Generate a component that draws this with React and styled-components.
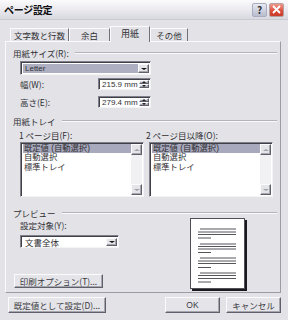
import React from 'react';
import styled, { createGlobalStyle, css } from 'styled-components';

const Global = createGlobalStyle`
  html, body { margin: 0; padding: 0; width: 288px; height: 320px; overflow: hidden; background: #e2e2e7; }
  body { font-family: "Noto Sans CJK JP", "Liberation Sans", sans-serif; }
  * { box-sizing: border-box; }
`;

const Window = styled.div`
  width: 288px;
  height: 320px;
  display: flex;
  flex-direction: column;
  background: #e2e2e7;
  color: #303034;
  font-size: 8.5px;
  line-height: 10px;
`;

const TitleBar = styled.div`
  height: 20px;
  flex: none;
  display: flex;
  align-items: center;
  gap: 2px;
  padding: 0 4px 0 4px;
  background: linear-gradient(#fbfbfd, #ececf1 45%, #d8d8e0);
  border-bottom: 1px solid #cacad2;
`;

const Title = styled.div`
  flex: 1;
  font-size: 10px;
  font-weight: bold;
  color: #111;
  letter-spacing: -0.3px;
`;

const CapButton = styled.div`
  width: 15px;
  height: 14px;
  border-radius: 2px;
  display: flex;
  align-items: center;
  justify-content: center;
  font-size: 10px;
  font-weight: bold;
  ${p => p.$close ? css`
    background: linear-gradient(#f09a8c, #dc4a38 60%, #c83a2a);
    border: 1px solid #b4a0a0;
    color: #fff;
  ` : css`
    background: linear-gradient(#e8eaf4, #b8bccc);
    border: 1px solid #a8acbc;
    color: #333;
  `}
`;

const Body = styled.div`
  flex: 1;
  display: flex;
  flex-direction: column;
  padding: 0 7px 0 5px;
`;

const TabsRow = styled.div`
  display: flex;
  align-items: flex-end;
  height: 21px;
  padding-left: 5px;
  position: relative;
  z-index: 1;
`;

const Tab = styled.div`
  width: ${p => p.$w}px;
  height: ${p => (p.$active ? 16 : 13)}px;
  margin-bottom: ${p => (p.$active ? -1 : 0)}px;
  display: flex;
  align-items: center;
  justify-content: center;
  background: #e2e2e7;
  border-top: 1px solid #fbfbfd;
  border-left: 1px solid #fbfbfd;
  border-right: 1px solid #707078;
  padding-bottom: ${p => (p.$active ? 2 : 0)}px;
  font-size: ${p => (p.$active ? 9 : 8.5)}px;
`;

const Panel = styled.div`
  height: 252px;
  flex: none;
  display: flex;
  flex-direction: column;
  padding: 6px 3px 0 7px;
  border: 1px solid #9c9ca4;
  border-top-color: #fbfbfd;
  border-left-color: #fbfbfd;
`;

const GroupHeader = styled.div`
  display: flex;
  align-items: center;
  gap: 6px;
  height: 10px;
  margin-top: ${p => p.$mt || 0}px;
`;

const GroupLine = styled.div`
  flex: 1;
  height: 2px;
  border-top: 1px solid #b2b2ba;
  border-bottom: 1px solid #fbfbfd;
`;

const sunken = css`
  background: #fff;
  border: 1px solid #80808a;
  border-right-color: #f4f4f6;
  border-bottom-color: #f4f4f6;
  box-shadow: inset 1px 1px 0 #404048;
`;

const raised = css`
  background: #e4e4e9;
  border: 1px solid #fbfbfd;
  border-right-color: #60606a;
  border-bottom-color: #60606a;
  box-shadow: inset -1px -1px 0 #a6a6ae;
`;

const Select = styled.div`
  ${sunken};
  width: ${p => p.$w}px;
  height: ${p => p.$h}px;
  margin-top: ${p => p.$mt || 0}px;
  margin-left: 7px;
  display: flex;
  align-items: stretch;
  padding: 2px 1px 1px 2px;
`;

const SelectValue = styled.div`
  flex: 1;
  display: flex;
  align-items: center;
  padding-left: 2px;
  background: ${p => (p.$hl ? '#afafc2' : 'transparent')};
  font-size: ${p => (p.$latin ? 8 : 8.5)}px;
  font-family: ${p => (p.$latin ? '"Liberation Sans", sans-serif' : 'inherit')};
`;

const ArrowBtn = styled.div`
  ${raised};
  width: 11px;
  display: flex;
  align-items: center;
  justify-content: center;
`;

const Tri = styled.div`
  width: 0;
  height: 0;
  border-left: ${p => p.$s}px solid transparent;
  border-right: ${p => p.$s}px solid transparent;
  ${p => (p.$up
    ? css`border-bottom: ${p.$s - (p.$s > 2 ? 1 : 0)}px solid ${p.$c};`
    : css`border-top: ${p.$s - (p.$s > 2 ? 1 : 0)}px solid ${p.$c};`)}
`;

const FieldRow = styled.div`
  display: flex;
  align-items: center;
  height: 12px;
  margin-top: ${p => p.$mt}px;
  padding-left: 7px;
`;

const FieldLabel = styled.div`
  width: 78px;
`;

const SpinBox = styled.div`
  ${sunken};
  width: 53px;
  height: 12px;
  display: flex;
  padding: 1px 1px 1px 2px;
`;

const SpinText = styled.div`
  flex: 1;
  font-family: "Liberation Sans", sans-serif;
  font-size: 8px;
  line-height: 9px;
  padding-left: 1px;
`;

const SpinBtns = styled.div`
  width: 10px;
  display: flex;
  flex-direction: column;
`;

const SpinBtn = styled.div`
  ${raised};
  flex: 1;
  display: flex;
  align-items: center;
  justify-content: center;
`;

const Trays = styled.div`
  display: grid;
  grid-template-columns: 124px 124px;
  column-gap: 5px;
  margin-top: 4px;
  padding-left: 7px;
`;

const TrayCol = styled.div`
  display: flex;
  flex-direction: column;
  gap: 2px;
`;

const TrayLabel = styled.div`
  margin-left: ${p => p.$ml || 0}px;
`;

const ListBox = styled.div`
  ${sunken};
  height: 55px;
  display: flex;
  padding: 1px 1px 1px 2px;
`;

const ListItems = styled.div`
  flex: 1;
  display: flex;
  flex-direction: column;
`;

const ListItem = styled.div`
  height: 9.3px;
  line-height: 9.3px;
  font-size: 8.3px;
  font-family: "Liberation Sans", "Noto Sans CJK JP", sans-serif;
  padding-left: 1px;
  background: ${p => (p.$sel ? '#a9a9bd' : 'transparent')};
`;

const ScrollBar = styled.div`
  width: 11px;
  display: flex;
  flex-direction: column;
  justify-content: space-between;
  background: #f1f1f3;
`;

const ScrollBtn = styled.div`
  ${raised};
  height: 11px;
  display: flex;
  align-items: center;
  justify-content: center;
`;

const PreviewRow = styled.div`
  display: flex;
  align-items: flex-start;
`;

const PreviewLeft = styled.div`
  width: 177px;
  display: flex;
  flex-direction: column;
  align-items: flex-start;
`;

const PlainLabel = styled.div`
  margin-top: ${p => p.$mt || 0}px;
  margin-left: 7px;
`;

const Button = styled.div`
  ${raised};
  width: ${p => p.$w}px;
  height: ${p => p.$h}px;
  margin-top: ${p => p.$mt || 0}px;
  margin-left: ${p => p.$ml || 0}px;
  display: flex;
  align-items: center;
  justify-content: center;
  color: #3a3a40;
  font-family: ${p => (p.$latin ? '"Liberation Sans", sans-serif' : 'inherit')};
`;

const Page = styled.div`
  width: 55px;
  height: 71px;
  background: #fff;
  border: 1px solid #50505a;
  box-shadow: 2px 2px 0 #1a1a1e;
`;

const BottomRow = styled.div`
  display: flex;
  justify-content: space-between;
  align-items: center;
  margin-top: 4px;
  padding-left: 3px;
`;

const RightBtns = styled.div`
  display: flex;
  gap: 6px;
`;

const pageLines = [
  [10, 9, 45], [13, 7, 45], [15.5, 7, 45], [19, 7, 20],
  [25, 9, 45], [27.5, 7, 45], [30, 7, 45], [33.5, 7, 20],
  [39, 9, 45], [42, 7, 45], [44.5, 7, 45], [48.5, 7, 20],
  [54, 9, 45], [56.5, 7, 45], [59.5, 7, 45], [63, 7, 20],
];

const trayItems = ['既定値 (自動選択)', '自動選択', '標準トレイ'];

function Tray({ label, ml }) {
  return (
    <TrayCol>
      <TrayLabel $ml={ml}>{label}</TrayLabel>
      <ListBox>
        <ListItems>
          {trayItems.map((t, i) => (
            <ListItem key={t} $sel={i === 0}>{t}</ListItem>
          ))}
        </ListItems>
        <ScrollBar>
          <ScrollBtn><Tri $s={3} $up $c="#a0a0a8" /></ScrollBtn>
          <ScrollBtn><Tri $s={3} $c="#a0a0a8" /></ScrollBtn>
        </ScrollBar>
      </ListBox>
    </TrayCol>
  );
}

function Spin({ value }) {
  return (
    <SpinBox>
      <SpinText>{value}</SpinText>
      <SpinBtns>
        <SpinBtn><Tri $s={2} $up $c="#222" /></SpinBtn>
        <SpinBtn><Tri $s={2} $c="#222" /></SpinBtn>
      </SpinBtns>
    </SpinBox>
  );
}

export default function App() {
  return (
    <>
      <Global />
      <Window>
        <TitleBar>
          <Title>ページ設定</Title>
          <CapButton>?</CapButton>
          <CapButton $close>
            <svg width="9" height="9" viewBox="0 0 9 9">
              <path d="M1 1L8 8M8 1L1 8" stroke="#fff" strokeWidth="1.8" />
            </svg>
          </CapButton>
        </TitleBar>
        <Body>
          <TabsRow>
            <Tab $w={59}>文字数と行数</Tab>
            <Tab $w={41}>余白</Tab>
            <Tab $w={40} $active>用紙</Tab>
            <Tab $w={38}>その他</Tab>
          </TabsRow>
          <Panel>
            <GroupHeader>
              <span>用紙サイズ(R):</span>
              <GroupLine />
            </GroupHeader>
            <Select $w={131} $h={14} $mt={3}>
              <SelectValue $hl $latin>Letter</SelectValue>
              <ArrowBtn><Tri $s={3} $c="#111" /></ArrowBtn>
            </Select>
            <FieldRow $mt={3}>
              <FieldLabel>幅(W):</FieldLabel>
              <Spin value="215.9 mm" />
            </FieldRow>
            <FieldRow $mt={6}>
              <FieldLabel>高さ(E):</FieldLabel>
              <Spin value="279.4 mm" />
            </FieldRow>
            <GroupHeader $mt={8}>
              <span>用紙トレイ</span>
              <GroupLine />
            </GroupHeader>
            <Trays>
              <Tray label="1 ページ目(F):" ml={-1} />
              <Tray label="2 ページ目以降(O):" ml={-3} />
            </Trays>
            <GroupHeader $mt={11}>
              <span>プレビュー</span>
              <GroupLine />
            </GroupHeader>
            <PreviewRow>
              <PreviewLeft>
                <PlainLabel $mt={2}>設定対象(Y):</PlainLabel>
                <Select $w={99} $h={13} $mt={5}>
                  <SelectValue>文書全体</SelectValue>
                  <ArrowBtn><Tri $s={3} $c="#111" /></ArrowBtn>
                </Select>
                <Button $w={89} $h={14} $mt={26} $ml={1}>印刷オプション(T)...</Button>
              </PreviewLeft>
              <Page>
                <svg width="53" height="69" viewBox="0 0 53 69">
                  {pageLines.map(([y, x1, x2], i) => (
                    <line key={i} x1={x1} x2={x2} y1={y} y2={y} stroke="#55555c" strokeWidth="1" />
                  ))}
                </svg>
              </Page>
            </PreviewRow>
          </Panel>
          <BottomRow>
            <Button $w={98} $h={16}>既定値として設定(D)...</Button>
            <RightBtns>
              <Button $w={55} $h={16} $latin>OK</Button>
              <Button $w={55} $h={16}>キャンセル</Button>
            </RightBtns>
          </BottomRow>
        </Body>
      </Window>
    </>
  );
}
